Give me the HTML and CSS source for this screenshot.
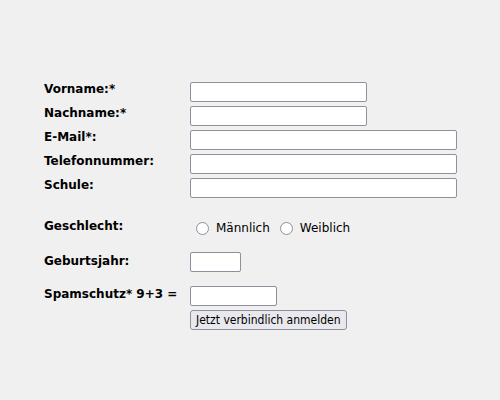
FILE: index.html
```html
<!DOCTYPE html>
<html lang="de">
<head>
<meta charset="utf-8">
<link rel="stylesheet" href="styles.css">
</head>
<body>
<form class="form">
  <div class="row"><label class="lbl">Vorname:*</label><input class="field short" type="text"></div>
  <div class="row"><label class="lbl">Nachname:*</label><input class="field short" type="text"></div>
  <div class="row"><label class="lbl">E-Mail*:</label><input class="field long" type="text"></div>
  <div class="row"><label class="lbl">Telefonnummer:</label><input class="field long" type="text"></div>
  <div class="row"><label class="lbl">Schule:</label><input class="field long" type="text"></div>
  <div class="row gender"><label class="lbl">Geschlecht:</label>
    <div class="radios">
      <span class="radio"></span><span class="opt">Männlich</span>
      <span class="radio"></span><span class="opt">Weiblich</span>
    </div>
  </div>
  <div class="row year"><label class="lbl">Geburtsjahr:</label><input class="field tiny" type="text"></div>
  <div class="row spam"><label class="lbl">Spamschutz* 9+3 =</label>
    <div class="stack">
      <input class="field mid" type="text">
      <button class="btn" type="button">Jetzt verbindlich anmelden</button>
    </div>
  </div>
</form>
</body>
</html>
```
FILE: styles.css
```css
html, body {
  margin: 0;
  padding: 0;
  background: #f0f0f0;
}
body {
  font-family: "DejaVu Sans", Verdana, sans-serif;
  color: #000;
}
.form {
  padding: 82px 0 0 44px;
  display: flex;
  flex-direction: column;
  gap: 4px;
}
.row {
  display: grid;
  grid-template-columns: 146px auto;
  align-items: start;
}
.lbl {
  font-weight: bold;
  font-size: 12px;
  line-height: 14px;
}
.field {
  box-sizing: border-box;
  height: 20px;
  margin: 0;
  padding: 0 3px;
  border: 1px solid #8f8f9d;
  border-radius: 2px;
  background: #fff;
  font: 13px "DejaVu Sans", sans-serif;
}
.short { width: 177px; }
.long { width: 267px; }
.tiny { width: 51px; }
.mid { width: 87px; }
.gender {
  margin-top: 17px;
}
.radios {
  display: flex;
  align-items: center;
  margin-top: 1px;
  font-size: 12px;
  line-height: 16px;
}
.radio {
  box-sizing: border-box;
  width: 13px;
  height: 13px;
  border: 1px solid #8f8f9d;
  border-radius: 50%;
  background: #fff;
  margin: 0 7px 0 6px;
}
.opt { margin-right: 4px; }
.year {
  margin-top: 12px;
}
.year .lbl { margin-top: 2px; }
.spam {
  margin-top: 10px;
}
.spam .lbl { margin-top: 1px; }
.stack {
  display: flex;
  flex-direction: column;
  align-items: flex-start;
  gap: 4px;
}
.btn {
  box-sizing: border-box;
  height: 20px;
  margin: 0;
  padding: 0 5px;
  border: 1px solid #8f8f9d;
  border-radius: 3px;
  background: #e9e9ed;
  font: 12px "DejaVu Sans Condensed", "DejaVu Sans", sans-serif;
  font-stretch: condensed;
  color: #000;
}
```
